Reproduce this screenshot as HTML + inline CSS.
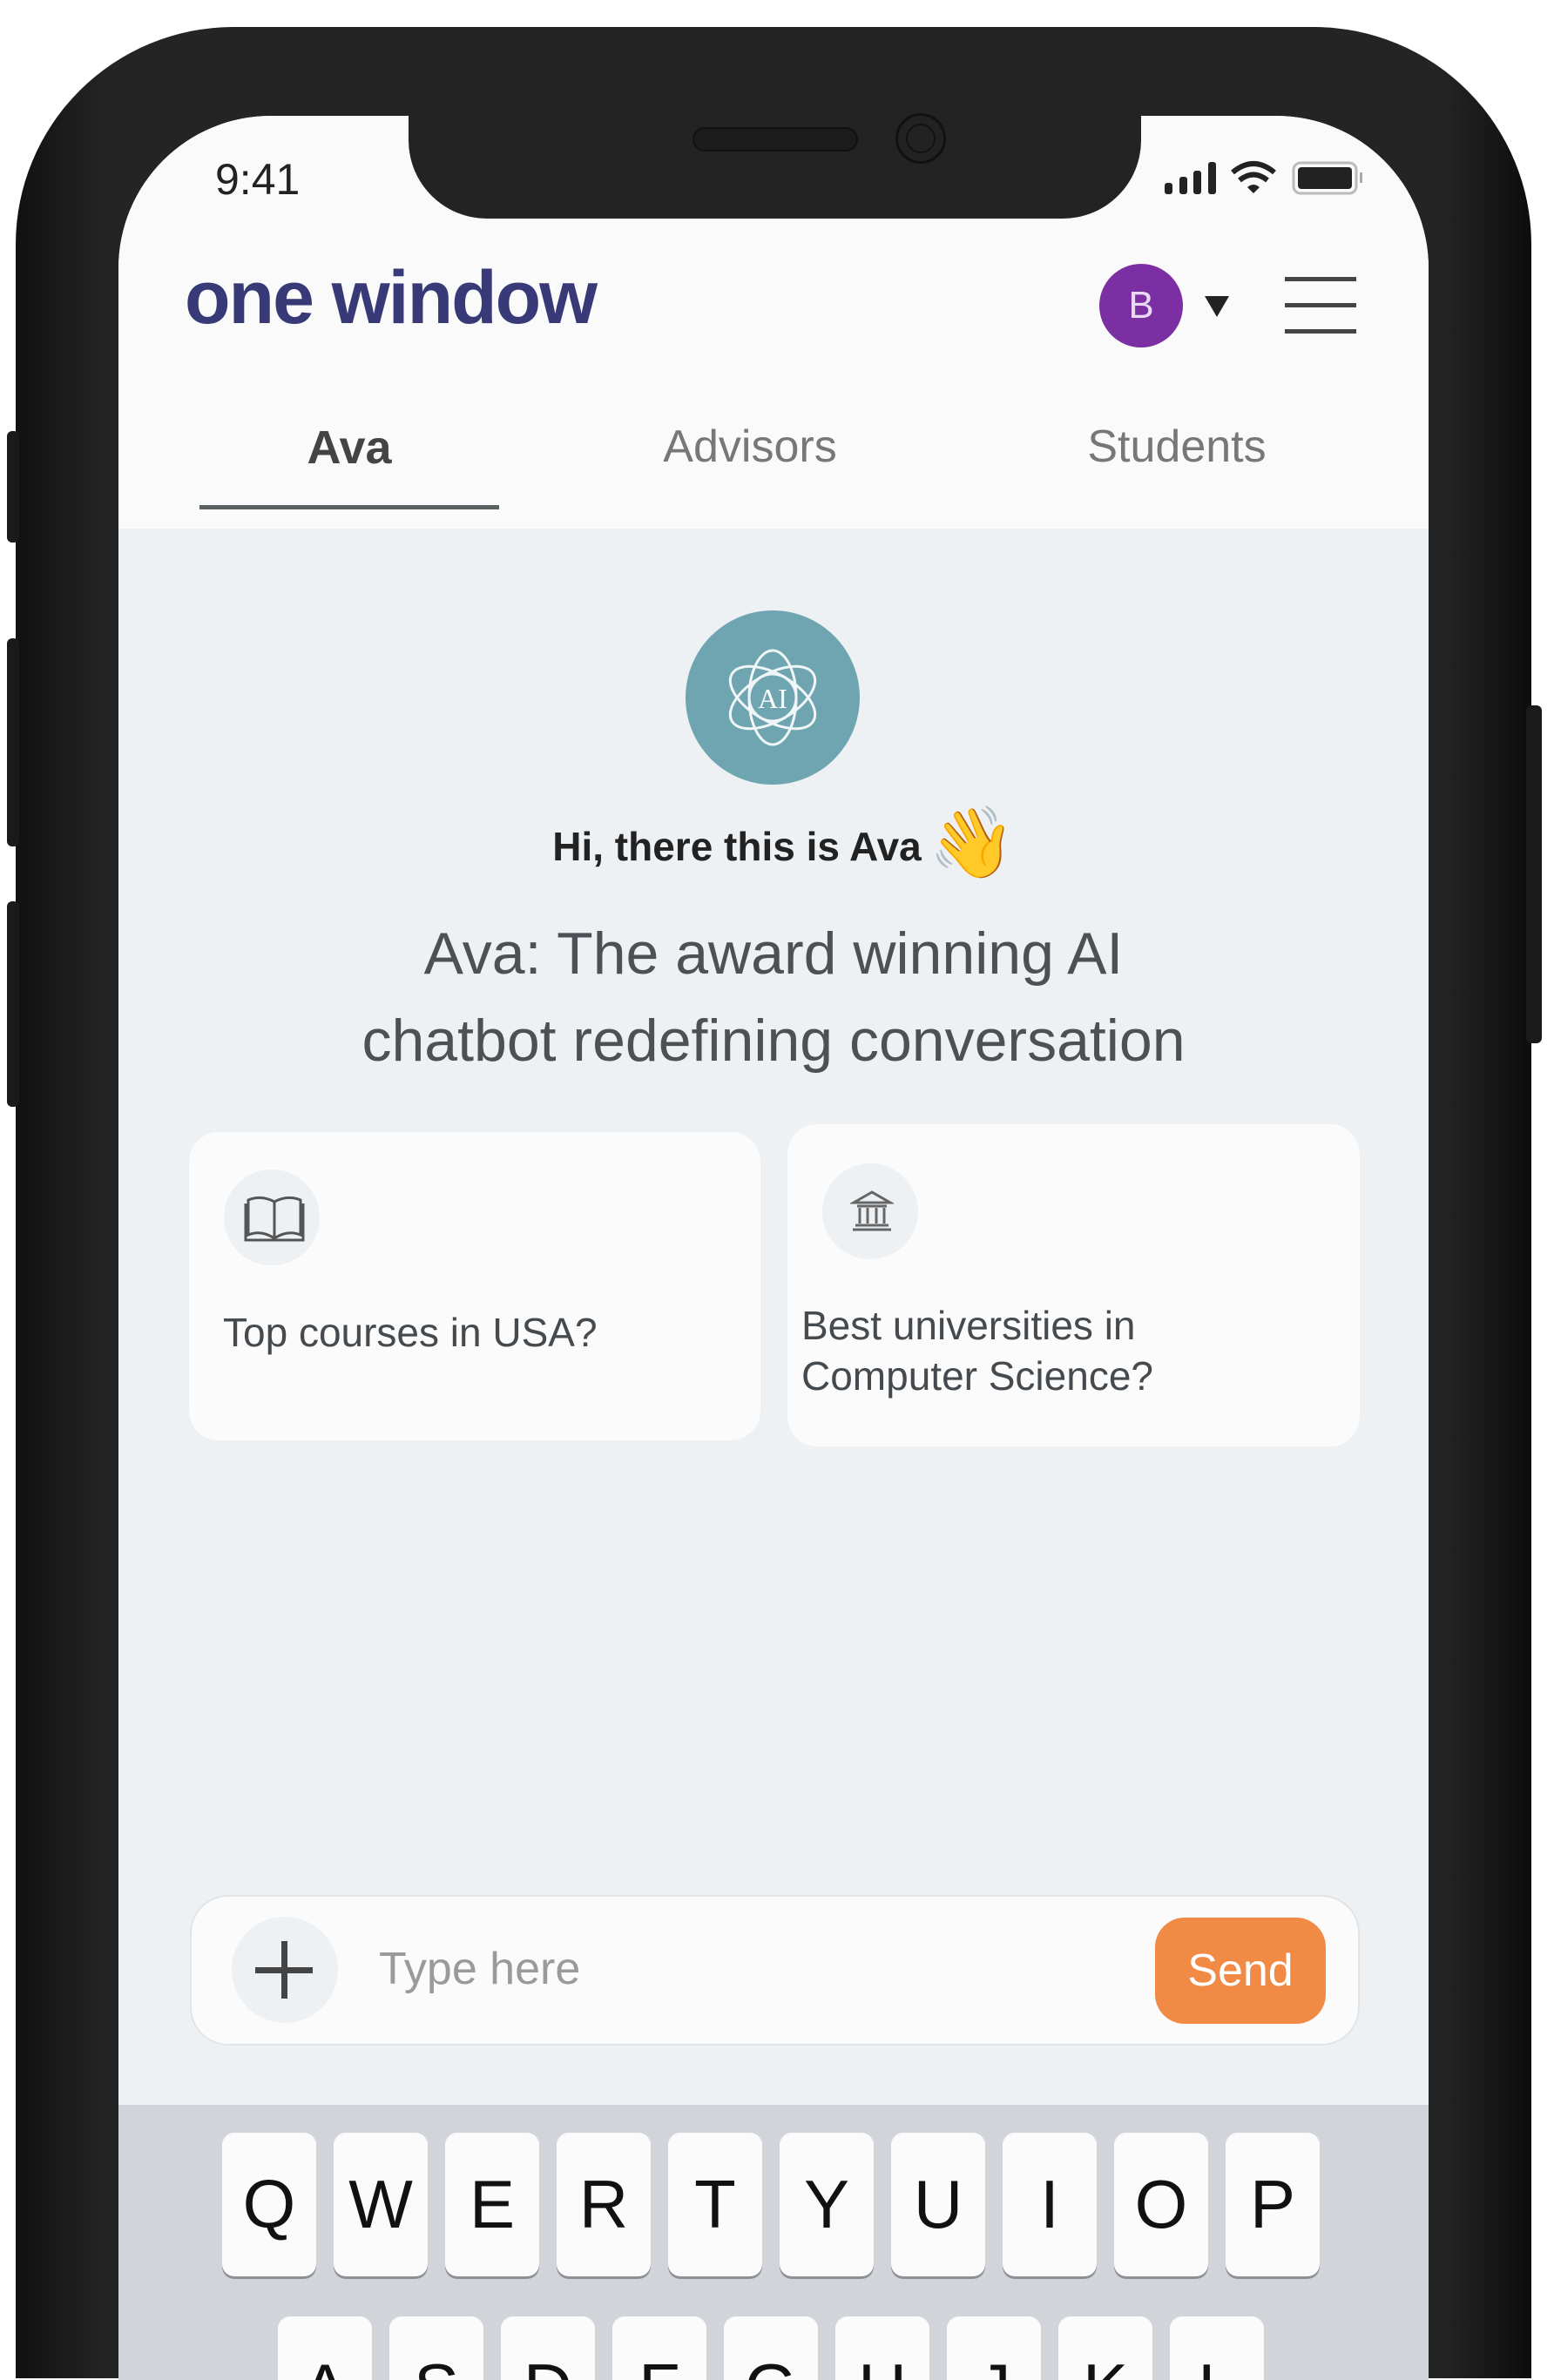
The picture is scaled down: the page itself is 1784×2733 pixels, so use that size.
<!DOCTYPE html>
<html><head><meta charset="utf-8"><style>
*{margin:0;padding:0;box-sizing:border-box}
body{width:1784px;height:2668px;background:#fff;position:relative;overflow:hidden;font-family:"Liberation Sans",sans-serif}
.abs{position:absolute}
.phone{left:18px;top:31px;width:1740px;height:2700px;background:linear-gradient(90deg,#111 0,#242424 6%,#242424 94%,#0d0d0d 100%);border-radius:250px 250px 0 0}
.btn{background:#1a1a1a;border-radius:6px}
.screen{left:136px;top:133px;width:1504px;height:2600px;background:#eef1f4;border-radius:175px 175px 0 0;overflow:hidden}
.header{left:0;top:0;width:1504px;height:474px;background:#fafafa}
.notch{left:469px;top:110px;width:841px;height:141px;background:#232323;border-radius:0 0 90px 90px}
.t{white-space:nowrap}
.key{width:108px;height:165px;background:#fbfbfc;border-radius:14px;box-shadow:0 3px 0 #8e9094;font-size:78px;color:#111;text-align:center;line-height:165px}
.card{background:#fbfbfb;border-radius:34px}
.ic{width:110px;height:110px;border-radius:55px;background:#eef1f4}
</style></head><body>
<div class="abs phone"></div>
<div class="abs btn" style="left:8px;top:495px;width:14px;height:128px"></div>
<div class="abs btn" style="left:8px;top:733px;width:14px;height:239px"></div>
<div class="abs btn" style="left:8px;top:1035px;width:14px;height:236px"></div>
<div class="abs btn" style="left:1752px;top:810px;width:18px;height:388px"></div>
<div class="abs screen">
  <div class="abs header"></div>
  <div class="abs t" style="left:111px;top:44px;font-size:50px;color:#222">9:41</div>
  <svg class="abs" style="left:1200px;top:50px" width="240" height="50" viewBox="1336 183 240 50">
    <rect x="1337" y="210" width="9" height="13" rx="3" fill="#222"/>
    <rect x="1354" y="203" width="9" height="20" rx="3" fill="#222"/>
    <rect x="1370" y="196" width="9" height="27" rx="3" fill="#222"/>
    <rect x="1387" y="186" width="9" height="37" rx="3" fill="#222"/>
    <path d="M1415 198 Q1439 178 1463 198" stroke="#222" stroke-width="6" fill="none"/>
    <path d="M1423 207 Q1439 194 1455 207" stroke="#222" stroke-width="6" fill="none"/>
    <path d="M1432 215 L1439 222 L1446 215 Q1439 209 1432 215Z" fill="#222"/>
    <rect x="1485" y="187" width="72" height="35" rx="8" fill="none" stroke="#bbb" stroke-width="3"/>
    <rect x="1490" y="192" width="62" height="25" rx="4" fill="#222"/>
    <rect x="1561" y="198" width="3" height="12" fill="#aaa"/>
  </svg>
  <div class="abs t" style="left:76px;top:160px;font-size:86px;font-weight:bold;color:#383a78;letter-spacing:-2px">one window</div>
  <div class="abs" style="left:1126px;top:170px;width:96px;height:96px;border-radius:48px;background:#7c2fa3;color:#e9d9f2;font-size:44px;text-align:center;line-height:96px">B</div>
  <svg class="abs" style="left:1247px;top:207px" width="28" height="24"><path d="M0 0H28L14 24Z" fill="#222"/></svg>
  <div class="abs" style="left:1339px;top:185px;width:82px;height:5px;background:#444"></div>
  <div class="abs" style="left:1339px;top:215px;width:82px;height:5px;background:#444"></div>
  <div class="abs" style="left:1339px;top:245px;width:82px;height:5px;background:#444"></div>
  <div class="abs t" style="left:93px;top:350px;width:344px;text-align:center;font-size:54px;font-weight:bold;color:#444">Ava</div>
  <div class="abs t" style="left:570px;top:350px;width:310px;text-align:center;font-size:52px;color:#777">Advisors</div>
  <div class="abs t" style="left:1060px;top:350px;width:310px;text-align:center;font-size:52px;color:#777">Students</div>
  <div class="abs" style="left:93px;top:447px;width:344px;height:5px;background:#5b6063"></div>
  <svg class="abs" style="left:651px;top:568px" width="200" height="200" viewBox="0 0 200 200">
    <circle cx="100" cy="100" r="100" fill="#6fa5b1"/>
    <g fill="none" stroke="#fff" stroke-width="3" opacity=".9">
      <ellipse cx="100" cy="100" rx="27" ry="54"/>
      <ellipse cx="100" cy="100" rx="27" ry="54" transform="rotate(60 100 100)"/>
      <ellipse cx="100" cy="100" rx="27" ry="54" transform="rotate(-60 100 100)"/>
      <circle cx="100" cy="100" r="27"/>
    </g>
    <text x="100" y="112" text-anchor="middle" font-size="32" fill="#fff" font-family="Liberation Serif">AI</text>
  </svg>
  <div class="abs t" style="left:0;top:812px;width:1420px;text-align:center;font-size:46px;font-weight:bold;color:#222">Hi, there this is Ava</div>
  <div class="abs t" style="left:930px;top:795px;font-size:80px;line-height:1;color:#f2c94c">👋</div>
  <div class="abs" style="left:0;top:912px;width:1504px;text-align:center;font-size:68px;line-height:100px;color:#4c5156">Ava: The award winning AI<br>chatbot redefining conversation</div>
  <div class="abs card" style="left:81px;top:1167px;width:656px;height:354px"></div>
  <div class="abs ic" style="left:121px;top:1210px"></div>
  <svg class="abs" style="left:144px;top:1239px" width="70" height="56" viewBox="0 0 70 56" fill="none" stroke="#555" stroke-width="3"><path d="M5 6Q20 0 35 8Q50 0 65 6V46Q50 40 35 50Q20 40 5 46Z"/><path d="M35 8V50"/><path d="M2 10V52H68V10"/></svg>
  <div class="abs t" style="left:120px;top:1370px;font-size:46px;color:#454a4f">Top courses in USA?</div>
  <div class="abs card" style="left:768px;top:1158px;width:657px;height:370px"></div>
  <div class="abs ic" style="left:808px;top:1203px"></div>
  <svg class="abs" style="left:840px;top:1232px" width="50" height="50" viewBox="0 0 50 50" fill="none" stroke="#666" stroke-width="3"><path d="M4 16L25 4L46 16Z"/><path d="M8 20H42M11 22V40M20 22V40M30 22V40M39 22V40M6 42H44M3 47H47"/></svg>
  <div class="abs" style="left:784px;top:1360px;font-size:46px;line-height:58px;color:#454a4f">Best universities in<br>Computer Science?</div>
  <div class="abs" style="left:82px;top:2043px;width:1343px;height:173px;background:#fbfbfb;border:2px solid #e2e4e6;border-radius:44px"></div>
  <div class="abs" style="left:130px;top:2068px;width:122px;height:122px;border-radius:61px;background:#eef1f4"></div>
  <div class="abs" style="left:157px;top:2126px;width:66px;height:7px;background:#444"></div>
  <div class="abs" style="left:187px;top:2096px;width:7px;height:66px;background:#444"></div>
  <div class="abs t" style="left:299px;top:2098px;font-size:52px;color:#9a9a9a">Type here</div>
  <div class="abs t" style="left:1190px;top:2069px;width:196px;height:122px;border-radius:34px;background:#f08a45;color:#fff;font-size:52px;text-align:center;line-height:122px">Send</div>
  <div class="abs" style="left:0;top:2284px;width:1504px;height:400px;background:#d1d4d9"></div>
  <div class="abs" style="left:119px;top:2316px;display:flex;gap:20px">
    <div class="key">Q</div><div class="key">W</div><div class="key">E</div><div class="key">R</div><div class="key">T</div><div class="key">Y</div><div class="key">U</div><div class="key">I</div><div class="key">O</div><div class="key">P</div>
  </div>
  <div class="abs" style="left:183px;top:2527px;display:flex;gap:20px">
    <div class="key">A</div><div class="key">S</div><div class="key">D</div><div class="key">F</div><div class="key">G</div><div class="key">H</div><div class="key">J</div><div class="key">K</div><div class="key">L</div>
  </div>
</div>
<div class="abs notch"></div>
<div class="abs" style="left:795px;top:146px;width:190px;height:28px;border-radius:14px;background:#1c1c1c;border:2px solid #111"></div>
<div class="abs" style="left:1028px;top:130px;width:58px;height:58px;border-radius:29px;background:#222;border:3px solid #111"></div>
<div class="abs" style="left:1040px;top:142px;width:34px;height:34px;border-radius:17px;border:2px solid #111"></div>
</body></html>
